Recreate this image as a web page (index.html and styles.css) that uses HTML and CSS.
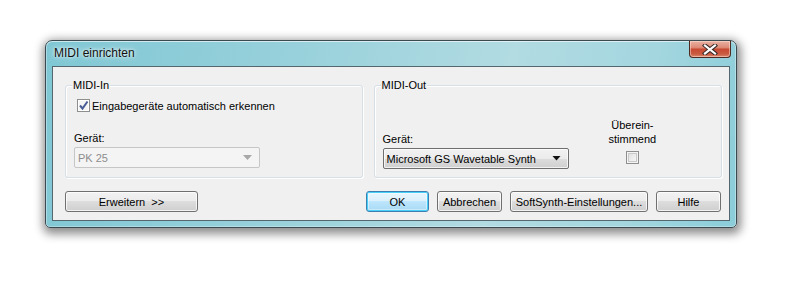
FILE: index.html
```html
<!DOCTYPE html>
<html>
<head>
<meta charset="utf-8">
<link rel="stylesheet" href="styles.css">
</head>
<body>
<div class="window">
  <div class="titlebar">
    <span class="title">MIDI einrichten</span>
    <div class="close">
      <svg width="16" height="11" viewBox="0 0 16 11">
        <path d="M3 1.5 L13 9.5 M13 1.5 L3 9.5" stroke="#3a2a28" stroke-width="4.2" stroke-linecap="square"/>
        <path d="M3 1.5 L13 9.5 M13 1.5 L3 9.5" stroke="#ffffff" stroke-width="2.2" stroke-linecap="square"/>
      </svg>
    </div>
  </div>
  <div class="client">
    <div class="groups">
      <div class="group group-in">
        <div class="legend">MIDI-In</div>
        <label class="check-row">
          <span class="checkbox checked">
            <svg width="11" height="11" viewBox="0 0 11 11"><path d="M2 5.5 L4.5 8.5 L9.5 1.5" fill="none" stroke="#4a5c96" stroke-width="2"/></svg>
          </span>
          <span>Eingabegeräte automatisch erkennen</span>
        </label>
        <div class="label">Gerät:</div>
        <div class="combo disabled">
          <span>PK 25</span>
          <svg width="9" height="5" viewBox="0 0 9 5"><path d="M0 0 H9 L4.5 5 Z" fill="#a8a8a8"/></svg>
        </div>
      </div>
      <div class="group group-out">
        <div class="legend">MIDI-Out</div>
        <div class="out-row">
          <div class="out-device">
            <div class="label">Gerät:</div>
            <div class="combo active">
              <span>Microsoft GS Wavetable Synth</span>
              <svg width="9" height="5" viewBox="0 0 9 5"><path d="M0.5 0 H8.5 L4.5 4.5 Z" fill="#111"/></svg>
            </div>
          </div>
          <div class="match">
            <div class="match-label">Überein-<br>stimmend</div>
            <span class="checkbox"></span>
          </div>
        </div>
      </div>
    </div>
    <div class="buttons">
      <button class="btn btn-more">Erweitern&nbsp;&nbsp;&gt;&gt;</button>
      <div class="right-buttons">
        <button class="btn btn-ok">OK</button>
        <button class="btn btn-cancel">Abbrechen</button>
        <button class="btn btn-synth">SoftSynth-Einstellungen...</button>
        <button class="btn btn-help">Hilfe</button>
      </div>
    </div>
  </div>
</div>
</body>
</html>
```

FILE: styles.css
```css
html, body {
  margin: 0;
  padding: 0;
  background: #ffffff;
}
body {
  width: 800px;
  height: 290px;
  overflow: hidden;
  font-family: "Liberation Sans", Arial, sans-serif;
  font-size: 11px;
  color: #000;
}
.window {
  margin: 40px 0 0 45px;
  width: 692px;
  height: 188px;
  box-sizing: border-box;
  border: 1px solid #3b4a50;
  border-radius: 7px 7px 5px 5px;
  background: linear-gradient(100deg, #7fc7d4 0%, #98d1db 35%, #b2dbe2 65%, #a3d6df 85%, #8acdd9 100%);
  box-shadow: 1px 3px 10px 3px rgba(0,0,0,0.45), inset 0 1px 0 rgba(255,255,255,0.6), inset 1px 0 0 rgba(255,255,255,0.35), inset -1px 0 0 rgba(255,255,255,0.35), inset 0 -1px 0 rgba(255,255,255,0.3);
  padding: 0 6px 6px 6px;
  display: flex;
  flex-direction: column;
}
.titlebar {
  height: 25px;
  display: flex;
  justify-content: space-between;
  align-items: flex-start;
}
.title {
  font-size: 12px;
  margin: 5px 0 0 2px;
  color: #111;
  text-shadow: 0 0 6px rgba(255,255,255,0.9), 0 0 3px rgba(255,255,255,0.8);
}
.close {
  width: 42px;
  height: 17px;
  box-sizing: border-box;
  margin-right: -1px;
  border: 1px solid #4f2a22;
  border-top: none;
  border-radius: 0 0 4px 4px;
  background: linear-gradient(#e9b1a2 0%, #de8c78 40%, #c84a33 52%, #c95a40 80%, #d9876c 100%);
  box-shadow: inset 0 0 0 1px rgba(255,230,220,0.5);
  display: flex;
  align-items: center;
  justify-content: center;
}
.client {
  flex: 1;
  border: 1px solid #55676e;
  background: #f0f0f0;
  padding: 18px 7px 0 12px;
  display: flex;
  flex-direction: column;
}
.groups {
  display: flex;
  gap: 11px;
}
.group {
  height: 93px;
  box-sizing: border-box;
  border: 1px solid #d5dfe5;
  border-radius: 3px;
  box-shadow: inset 1px 1px 0 #fff, 1px 1px 0 #fff;
}
.group-in { width: 298px; }
.group-out { width: 349px; }
.legend {
  width: max-content;
  margin: -8px 0 0 6px;
  padding: 0 1px;
  background: #f0f0f0;
  line-height: 14px;
  height: 14px;
}
.check-row {
  display: flex;
  align-items: center;
  gap: 2px;
  margin: 7px 0 0 11px;
  height: 13px;
}
.checkbox {
  width: 13px;
  height: 13px;
  box-sizing: border-box;
  border: 1px solid #8f8f8f;
  background: linear-gradient(135deg, #dcdcdc, #fbfbfb);
  box-shadow: inset 0 0 0 1px #f4f4f4, inset 0 0 0 2px #c9c9c9;
  display: inline-flex;
  align-items: center;
  justify-content: center;
}
.checkbox.checked {
  background: #f4f4f4;
  box-shadow: inset 0 0 0 1px #fff;
}
.label {
  margin: 0;
  line-height: 14px;
}
.group-in .label {
  margin: 19px 0 0 8px;
}
.combo {
  height: 21px;
  box-sizing: border-box;
  border-radius: 2px;
  display: flex;
  align-items: center;
  justify-content: space-between;
  padding: 0 7px 0 3px;
}
.combo.disabled {
  width: 186px;
  margin: 2px 0 0 8px;
  border: 1px solid #c6c6c6;
  background: #f4f4f4;
  color: #8d8d8d;
}
.combo.active {
  width: 186px;
  margin-top: 2px;
  border: 1px solid #6f6f6f;
  background: linear-gradient(#f2f2f2 0%, #ebebeb 50%, #dddddd 50%, #cfcfcf 100%);
  box-shadow: inset 0 0 0 1px rgba(255,255,255,0.7);
}
.out-row {
  display: flex;
  align-items: flex-end;
  margin: 0 0 0 8px;
}
.out-device {
  margin-top: 40px;
}
.match {
  display: flex;
  flex-direction: column;
  align-items: center;
  margin-left: 40px;
  margin-bottom: 5px;
}
.match-label {
  text-align: center;
  line-height: 14px;
  margin-bottom: 5px;
}
.buttons {
  display: flex;
  justify-content: space-between;
  margin-top: 13px;
  padding-right: 1px;
}
.right-buttons {
  display: flex;
  gap: 8px;
}
.btn {
  font-family: inherit;
  font-size: 11px;
  color: #000;
  height: 21px;
  box-sizing: border-box;
  border: 1px solid #707070;
  border-radius: 3px;
  background: linear-gradient(#f2f2f2 0%, #ebebeb 50%, #dddddd 50%, #cfcfcf 100%);
  box-shadow: inset 0 0 0 1px rgba(255,255,255,0.75);
  padding: 0;
  margin: 0;
}
.btn-more { width: 133px; }
.btn-ok {
  width: 63px;
  border-color: #3c7fb1;
  background: linear-gradient(#eaf6fd 0%, #d9f0fc 50%, #bee6fd 50%, #a7d9f5 100%);
  box-shadow: inset 0 0 0 1px #48d0f8, inset 0 0 0 2px rgba(255,255,255,0.4);
}
.btn-cancel { width: 65px; }
.btn-synth { width: 138px; }
.btn-help { width: 65px; }
```
